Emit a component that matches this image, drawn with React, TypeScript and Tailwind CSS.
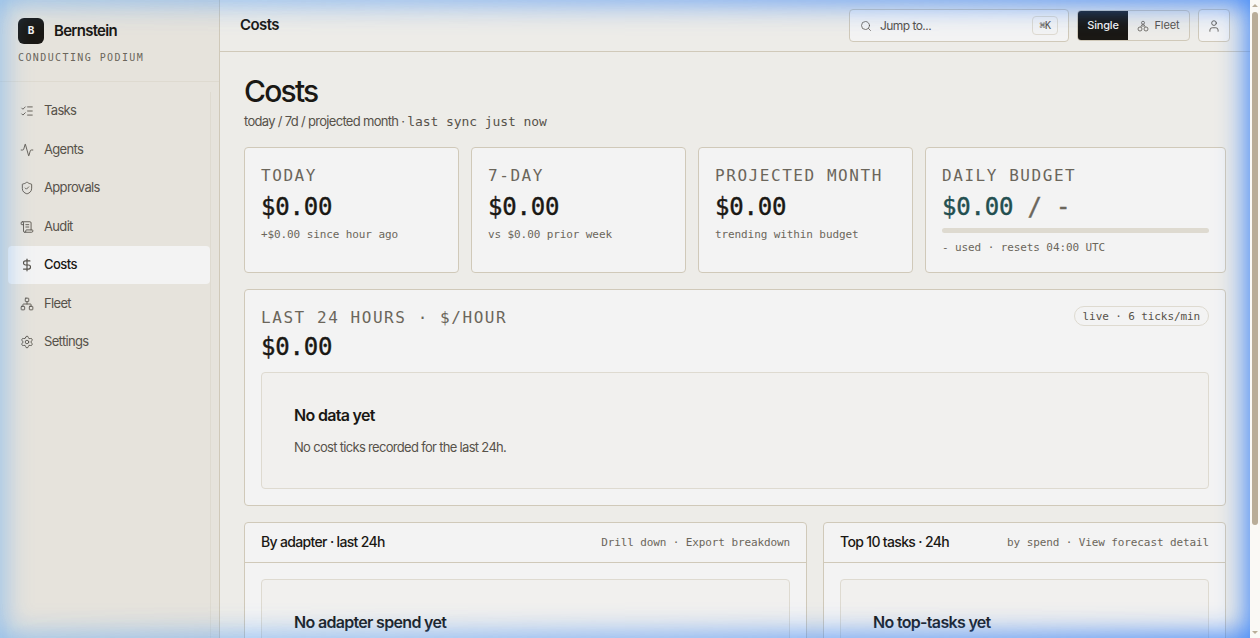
import {
  Activity,
  DollarSign,
  ListChecks,
  Network,
  ScrollText,
  Search,
  Settings,
  ShieldCheck,
  User,
} from "lucide-react";

const mono = "font-['DejaVu_Sans_Mono',monospace]";

const navItems = [
  { label: "Tasks", icon: ListChecks },
  { label: "Agents", icon: Activity },
  { label: "Approvals", icon: ShieldCheck },
  { label: "Audit", icon: ScrollText },
  { label: "Costs", icon: DollarSign, active: true },
  { label: "Fleet", icon: Network },
  { label: "Settings", icon: Settings },
];

const stats = [
  { label: "TODAY", value: "$0.00", note: "+$0.00 since hour ago" },
  { label: "7-DAY", value: "$0.00", note: "vs $0.00 prior week" },
  { label: "PROJECTED MONTH", value: "$0.00", note: "trending within budget" },
];

function FleetIcon() {
  return (
    <svg width="12" height="12" viewBox="0 0 24 24" fill="none" stroke="currentColor" strokeWidth="1.5">
      <circle cx="12" cy="5.500" r="3" />
      <circle cx="6" cy="18" r="4" />
      <circle cx="18" cy="18" r="4" />
      <path d="M10.500 8.500L7.500 14M13.500 8.500L16.500 14M12 8.500V14" />
    </svg>
  );
}

function Sidebar() {
  return (
    <aside className="flex w-[220px] shrink-0 flex-col border-r border-[#d0c9b9] bg-[#e6e3dc]">
      <div className="h-[82px] border-b border-[#dedad0] px-[18px] pt-[18px]">
        <div className="flex items-center gap-[10px]">
          <div className="flex size-[26px] items-center justify-center rounded-md bg-[#1a1814] font-['DejaVu_Sans_Mono',monospace] text-[11px] font-bold text-[#f3f3f3]">
            B
          </div>
          <span className="text-[15px] font-semibold tracking-[-0.720px]">Bernstein</span>
        </div>
        <div className="mt-[6px] font-['DejaVu_Sans_Mono',monospace] text-[10px] leading-4 tracking-[1.4px] whitespace-nowrap text-[#6b665b]">
          CONDUCTING PODIUM
        </div>
      </div>

      <nav className="mx-2 mt-[10px] flex flex-1 flex-col gap-[0.500px] border-r border-[#dedad0] tracking-[-0.660px]">
        {navItems.map(({ label, icon: Icon, active }) => (
          <a
            key={label}
            className={
              active
                ? "flex h-[38px] items-center gap-[10px] rounded bg-[#f3f3f3] px-3 text-[13px] font-medium tracking-[-0.580px] text-[#1a1814]"
                : "flex h-[38px] items-center gap-[10px] rounded px-3 text-[13px] text-[#57524a]"
            }
          >
            <Icon size={14} strokeWidth={active ? 2 : 1.5} className="text-[#57524a]" />
            {label}
          </a>
        ))}
      </nav>
    </aside>
  );
}

function Header() {
  return (
    <header className="flex h-[52px] shrink-0 items-center border-b border-[#d0c9b9] px-5">
      <span className="flex-1 text-[15px] font-semibold tracking-[-0.560px]">Costs</span>
      <div className="flex h-[33px] w-[220px] items-center rounded border border-[#d0c9b9] bg-[#f3f3f3] px-[10px] text-xs text-[#57524a]">
        <Search size={12} strokeWidth={1.5} />
        <span className="ml-2 flex-1 tracking-[-0.550px]">Jump to...</span>
        <kbd className="flex h-[19px] w-[26px] items-center justify-center rounded border border-[#dedad0] font-['DejaVu_Sans_Mono',monospace] text-[10px] tracking-[-0.500px]">
          ⌘K
        </kbd>
      </div>
      <div className="ml-2 flex h-[31px] w-[113px] overflow-hidden rounded border border-[#d0c9b9] text-[11px]">
        <span className="flex w-[50px] items-center justify-center bg-[#1a1814] font-medium tracking-[-0.200px] text-[#f3f3f3]">
          Single
        </span>
        <span className="flex flex-1 items-center justify-center gap-[5px] text-[#57524a]">
          <FleetIcon />
          Fleet
        </span>
      </div>
      <div className="ml-2 flex h-[33px] w-8 items-center justify-center rounded border border-[#d0c9b9] bg-[#f3f3f3] text-[#57524a]">
        <User size={14} strokeWidth={1.5} />
      </div>
    </header>
  );
}

function Stat({ label, value, note }: { label: string; value: string; note: string }) {
  return (
    <div className={`${mono} h-[126px] rounded border border-[#d0c9b9] bg-[#f3f3f3] px-4 pt-[17px]`}>
      <div className="text-base leading-[22px] tracking-[1.56px] whitespace-nowrap text-[#6b665b]">{label}</div>
      <div className="mt-1 text-2xl leading-8 tracking-[-0.200px] [-webkit-text-stroke:0.400px]">{value}</div>
      <div className="mt-1 text-[11px] leading-4 tracking-[-0.100px] text-[#6b665b]">{note}</div>
    </div>
  );
}

function Panel({ title, links, empty }: { title: string; links: string; empty: string }) {
  return (
    <section className="rounded border border-[#d0c9b9] bg-[#f3f3f3]">
      <div className="flex h-10 items-center justify-between border-b border-[#d0c9b9] px-4">
        <h2 className="pb-[2px] text-sm font-medium tracking-[-0.660px]">{title}</h2>
        <span className="pt-px font-['DejaVu_Sans_Mono',monospace] text-[11px] tracking-[-0.110px] text-[#6b665b]">
          {links}
        </span>
      </div>
      <div className="m-4 h-[117px] rounded border border-[#dedad0] bg-[#f1f0ee] p-8">
        <h3 className="text-base leading-[21px] font-semibold tracking-[-0.680px]">{empty}</h3>
      </div>
    </section>
  );
}

function Scrollbar() {
  return (
    <div className="flex w-[10px] shrink-0 flex-col items-center bg-[#faf9f5]">
      <svg width="10" height="12" viewBox="0 0 10 12" fill="#b9ad98">
        <path d="M2 7L5 4L8 7Z" />
      </svg>
      <div className="h-[513px] w-[6px] rounded-full bg-[#b9ad98]" />
      <svg className="mt-auto" width="10" height="9" viewBox="0 0 10 9" fill="#b9ad98">
        <path d="M2 2L5 5L8 2Z" />
      </svg>
    </div>
  );
}

export default function App() {
  return (
    <div className="flex h-[638px] w-[1260px] overflow-hidden bg-[#edece8] font-['Inter',sans-serif] tracking-[-0.080px] text-[#1a1814]">
      <div className="relative flex h-full flex-1 overflow-hidden">
        <Sidebar />
        <div className="flex min-w-0 flex-1 flex-col">
          <Header />
          <main className="flex-1 overflow-hidden px-6 pt-[19px]">
            <h1 className="h-10 text-[30px] leading-10 font-medium tracking-[-1.800px]">Costs</h1>
            <p className="mt-[1px] text-[13px] leading-[18px] tracking-[-0.690px] whitespace-nowrap text-[#57524a]">
              today / 7d / projected month ·{" "}
              <span className="font-['DejaVu_Sans_Mono',monospace] tracking-[-0.080px]">last sync just now</span>
            </p>

            {/* Spend summary */}
            <div className="mt-4 grid grid-cols-[215px_215px_215px_301px] gap-3">
              {stats.map((stat) => (
                <Stat key={stat.label} {...stat} />
              ))}
              <div className={`${mono} rounded border border-[#d0c9b9] bg-[#f3f3f3] px-4 pt-[17px]`}>
                <div className="text-base leading-[22px] tracking-[1.56px] text-[#6b665b]">DAILY BUDGET</div>
                <div className="mt-1 text-2xl leading-8 tracking-[-0.200px] text-[#234f50] [-webkit-text-stroke:0.400px]">
                  $0.00 <span className="text-[#6b665b]">/ -</span>
                </div>
                <div className="mt-[5px] h-[5px] rounded-sm bg-[#dedad0]" />
                <div className="mt-[7px] text-[11px] leading-4 tracking-[-0.100px] text-[#6b665b]">
                  - used · resets 04:00 UTC
                </div>
              </div>
            </div>

            {/* Hourly chart */}
            <section className="mt-4 h-[217px] rounded border border-[#d0c9b9] bg-[#f3f3f3] p-4">
              <div className="flex items-start justify-between font-['DejaVu_Sans_Mono',monospace]">
                <div className="pt-px">
                  <div className="text-base leading-[22px] tracking-[1.56px] text-[#6b665b]">LAST 24 HOURS · $/HOUR</div>
                  <div className="mt-[2px] text-2xl leading-8 tracking-[-0.200px] [-webkit-text-stroke:0.400px]">$0.00</div>
                </div>
                <span className="flex h-5 items-center rounded-full border border-[#dedad0] px-2 pt-[2px] text-[11px] tracking-[-0.100px] text-[#57524a]">
                  live · 6 ticks/min
                </span>
              </div>
              <div className="mt-[9px] h-[117px] rounded border border-[#dedad0] bg-[#f1f0ee] p-8">
                <h3 className="text-base leading-[21px] font-semibold tracking-[-0.680px]">No data yet</h3>
                <p className="mt-[11px] text-[13px] leading-5 tracking-[-0.690px] text-[#57524a]">
                  No cost ticks recorded for the last 24h.
                </p>
              </div>
            </section>

            <div className="mt-4 grid grid-cols-[563px_403px] gap-4">
              <Panel title="By adapter · last 24h" links="Drill down · Export breakdown" empty="No adapter spend yet" />
              <Panel title="Top 10 tasks · 24h" links="by spend · View forecast detail" empty="No top-tasks yet" />
            </div>
          </main>
        </div>

        {/* Edge glow, paler on the left and deeper on the right */}
        <div className="pointer-events-none absolute inset-0 shadow-[inset_0_0_28px_2px_rgba(85,165,245,0.620)] [mask-image:linear-gradient(to_right,black,transparent)]" />
        <div className="pointer-events-none absolute inset-0 shadow-[inset_0_0_27px_4px_rgba(50,127,250,0.920)] [mask-image:linear-gradient(to_right,transparent,black)]" />
      </div>
      <Scrollbar />
    </div>
  );
}
